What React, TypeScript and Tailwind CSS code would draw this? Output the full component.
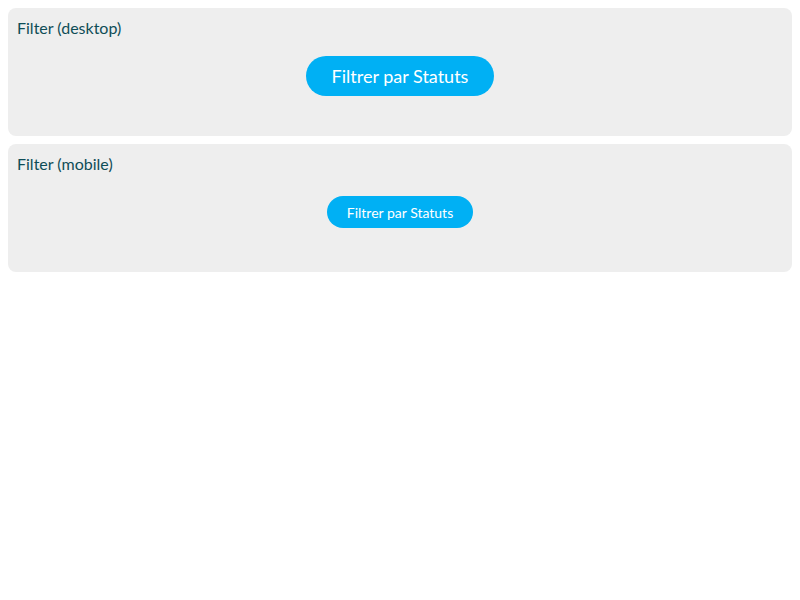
export default function App() {
  const font = { fontFamily: 'Lato, "Noto Sans", sans-serif' };
  return (
    <div className="p-2 flex flex-col gap-2" style={font}>
      <div className="h-[128px] rounded-lg bg-[#eeeeee] px-[9px] pt-[8px]">
        <div className="text-[16px] leading-[24px] text-[#0e4d57]">Filter (desktop)</div>
        <div className="flex justify-center mt-[16px]">
          <button className="h-[40px] w-[188px] rounded-full bg-[#00b0f4] text-white text-[18px]">
            Filtrer par Statuts
          </button>
        </div>
      </div>
      <div className="h-[128px] rounded-lg bg-[#eeeeee] px-[9px] pt-[8px]">
        <div className="text-[16px] leading-[24px] text-[#0e4d57]">Filter (mobile)</div>
        <div className="flex justify-center mt-[20px]">
          <button className="h-[32px] w-[146px] rounded-full bg-[#00b0f4] text-white text-[14px]">
            Filtrer par Statuts
          </button>
        </div>
      </div>
    </div>
  );
}
